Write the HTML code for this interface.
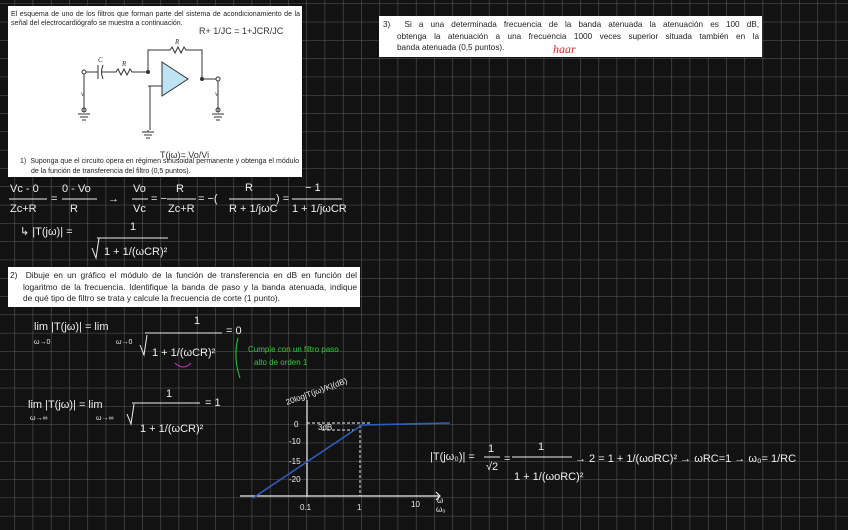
<!DOCTYPE html>
<html><head><meta charset="utf-8"><style>
body{margin:0;width:848px;height:530px;overflow:hidden;background:#121212;font-family:"Liberation Sans",sans-serif}
.box{position:absolute;background:#fff;color:#222}
.box div{text-align:justify;text-align-last:justify;white-space:normal;overflow:hidden}
.box div.l{text-align-last:left;white-space:nowrap}
svg{position:absolute;left:0;top:0}
.h{fill:#eee;font-family:"Liberation Sans",sans-serif}
</style></head><body>
<svg width="848" height="530">
<defs><pattern id="g" x="14.4" y="3.5" width="18.25" height="18.3" patternUnits="userSpaceOnUse">
<path d="M0 0V18.3M0 0H18.25" stroke="#5a5a5a" stroke-width="1.1" fill="none"/></pattern></defs>
<rect width="848" height="530" fill="url(#g)"/>
</svg>

<div class="box" style="left:8px;top:6px;width:294px;height:171px;font-size:7px;line-height:9.5px">
<div style="position:absolute;left:3px;top:4px;width:289px;height:10px">El esquema de uno de los filtros que forman parte del sistema de acondicionamiento de la</div>
<div class="l" style="position:absolute;left:3px;top:13px">señal del electrocardiógrafo se muestra a continuación.</div>
<div style="position:absolute;left:12px;top:151px;width:279px;height:10px">1)&nbsp; Suponga que el circuito opera en régimen sinusoidal permanente y obtenga el módulo</div>
<div class="l" style="position:absolute;left:23px;top:161px">de la función de transferencia del filtro (0,5 puntos).</div>
</div>
<div class="box" style="left:379px;top:16px;width:383px;height:41px;font-size:8.2px;line-height:11.5px">
<div style="position:absolute;left:4px;top:3px;width:376px;height:12px">3)&nbsp; Si a una determinada frecuencia de la banda atenuada la atenuación es 100 dB,</div>
<div style="position:absolute;left:18px;top:14.5px;width:362px;height:12px">obtenga la atenuación a una frecuencia 1000 veces superior situada también en la</div>
<div class="l" style="position:absolute;left:18px;top:26px">banda atenuada (0,5 puntos).</div>
</div>
<div class="box" style="left:8px;top:267px;width:352px;height:40px;font-size:8.4px;line-height:11.5px">
<div style="position:absolute;left:2px;top:3px;width:347px;height:12px">2)&nbsp; Dibuje en un gráfico el módulo de la función de transferencia en dB en función del</div>
<div style="position:absolute;left:15px;top:14.5px;width:334px;height:12px">logaritmo de la frecuencia. Identifique la banda de paso y la banda atenuada, indique</div>
<div class="l" style="position:absolute;left:15px;top:26px">de qué tipo de filtro se trata y calcule la frecuencia de corte (1 punto).</div>
</div>

<svg width="848" height="530">
<g stroke="#333" stroke-width="1" fill="none">
<circle cx="84" cy="72" r="2"/><path d="M86 72H98M98 65V79M103 65q-3 7 0 14M102 72H116l2-3 3 6 3-6 3 6 3-6 2 3H148"/>
<path d="M148 72V50H170l2-3 3 6 3-6 3 6 3-6 2 3H202V79M202 79H216"/><circle cx="218" cy="79" r="2"/>
<path d="M148 86H162M150 86V130M84 74V112M218 81V112M148 130V132"/>
<path d="M78 114h12M80 117h8M82 120h4M142 132h12M144 135h8M146 138h4M212 114h12M214 117h8M216 120h4"/>
<circle cx="84" cy="110" r="2"/><circle cx="218" cy="110" r="2"/>
</g>
<path d="M162 62L188 79L162 96Z" fill="#bde3f5" stroke="#333"/>
<circle cx="148" cy="72" r="2" fill="#333"/><circle cx="202" cy="79" r="2" fill="#333"/>
<g font-size="7" fill="#333" font-style="italic" font-family="Liberation Serif"><text x="98" y="62">C</text><text x="122" y="66">R</text><text x="175" y="44">R</text><text x="81" y="96">v</text><text x="215" y="96">v</text></g>
<g font-size="9" fill="#333" font-family="Liberation Sans"><text x="199" y="34">R+ 1/JC = 1+JCR/JC</text><text x="160" y="158">T(jω)= Vo/Vi</text></g>
<text x="553" y="53" font-size="12" fill="#d22" font-style="italic" font-family="Liberation Serif">haar</text>
<g class="h" font-size="11">
<text x="10" y="192">Vc - 0</text><text x="10" y="212">Zc+R</text><path d="M9 199H47M62 199H97M132 199H148M167 199H196M229 199H275M292 199H342" stroke="#eee"/>
<text x="51" y="202">=</text><text x="62" y="192">0 - Vo</text><text x="70" y="212">R</text><text x="108" y="202">→</text>
<text x="133" y="192">Vo</text><text x="133" y="212">Vc</text><text x="151" y="202">=  −</text><text x="176" y="192">R</text><text x="168" y="212">Zc+R</text>
<text x="198" y="202">= −(</text><text x="245" y="191">R</text><text x="229" y="212">R + 1/jωC</text><text x="276" y="202">) =</text>
<text x="305" y="191">− 1</text><text x="292" y="212">1 + 1/jωCR</text>
<text x="20" y="235">↳ |T(jω)| =</text><text x="130" y="230">1</text><path d="M97 238H168M92 248l4 10 3-20" stroke="#eee" fill="none"/><text x="104" y="255">1 +  1/(ωCR)²</text>
<text x="34" y="330">lim |T(jω)| = lim</text><text x="34" y="344" font-size="7">ω→0</text><text x="116" y="344" font-size="7">ω→0</text>
<text x="194" y="324">1</text><path d="M145 333H222M140 345l4 10 3-20" stroke="#eee" fill="none"/><text x="152" y="356">1 +  1/(ωCR)²</text><text x="226" y="334">= 0</text>
<text x="28" y="408">lim |T(jω)| = lim</text><text x="30" y="420" font-size="7">ω→∞</text><text x="96" y="420" font-size="7">ω→∞</text>
<text x="166" y="397">1</text><path d="M132 403H200M127 414l4 10 3-20" stroke="#eee" fill="none"/><text x="140" y="432">1 +  1/(ωCR)²</text><text x="205" y="406">= 1</text>
<text x="430" y="460">|T(jω₀)| =</text><text x="488" y="452">1</text><text x="486" y="470">√2</text><path d="M484 457H500M512 457H572" stroke="#eee"/>
<text x="504" y="462">=</text><text x="538" y="450">1</text><text x="514" y="480">1 + 1/(ωoRC)²</text>
<text x="575" y="462">→ 2 = 1 +  1/(ωoRC)²  → ωRC=1 → ω₀= 1/RC</text>
</g>
<path d="M175 363q8 8 16 0" stroke="#c3c" fill="none"/>
<path d="M238 338q-5 20 2 40" stroke="#3c3" fill="none"/>
<text x="248" y="352" font-size="8" fill="#3c3">Cumple con un filtro paso</text><text x="254" y="365" font-size="8" fill="#3c3">alto de orden 1</text>
<g stroke="#eee" fill="none" stroke-width="1.2"><path d="M307 497V400M240 496H440M436 492l4 4-4 4"/></g>
<path d="M307 423H372M360 425V496M322 430H355" stroke="#eee" stroke-dasharray="3,2" fill="none"/>
<path d="M253 498L362 425L450 423" stroke="#2e5fbf" stroke-width="1.6" fill="none"/>
<g class="h" font-size="8"><text x="294" y="427">0</text><text x="289" y="444">-10</text><text x="289" y="464">-15</text><text x="289" y="482">-20</text><text x="318" y="430">3dB</text>
<text x="300" y="510">0.1</text><text x="357" y="510">1</text><text x="411" y="507">10</text><text x="437" y="503">ω</text><text x="436" y="512">ω₀</text>
<text x="287" y="405" transform="rotate(-20 287 405)">20log|T(jω)/K|(dB)</text></g>
</svg>
</body></html>
